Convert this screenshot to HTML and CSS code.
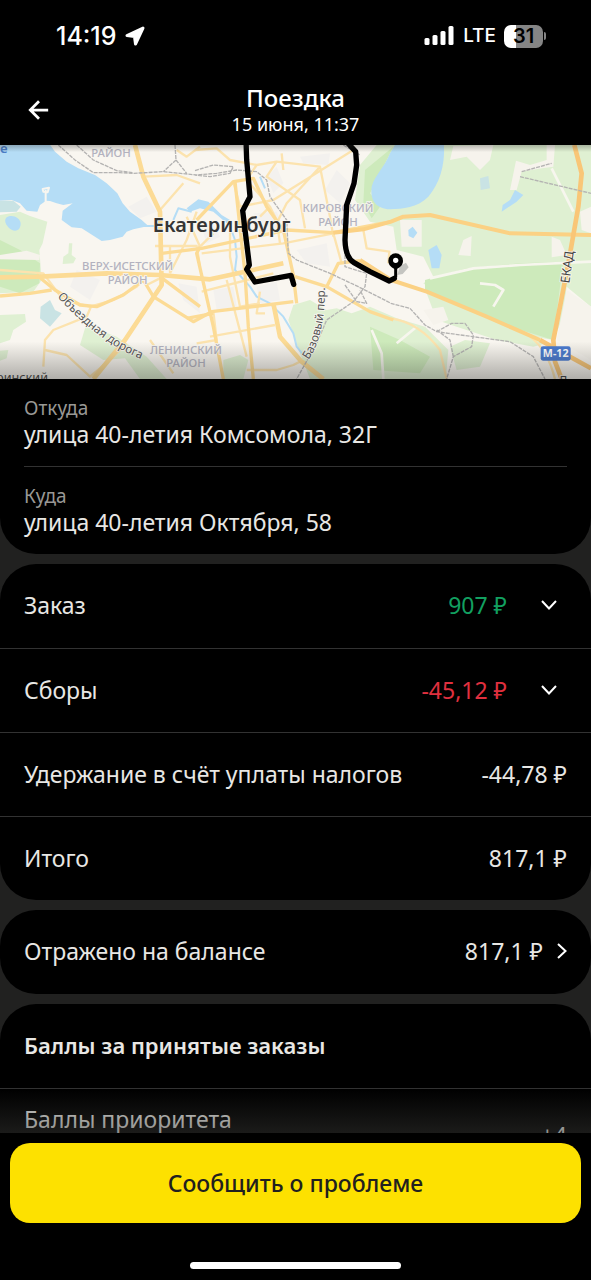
FILE: index.html
```html
<!DOCTYPE html>
<html lang="ru">
<head>
    <meta charset="UTF-8">
    <meta name="viewport" content="width=device-width, initial-scale=1.0">
    <title>Поездка</title>
    <link rel="stylesheet" href="styles.css">
</head>
<body>
    <div class="screen">
        <div class="status-bar">
            <div class="status-left">
                <span class="clock">14:19</span>
                <svg class="location-icon" viewBox="0 0 20 20"><path d="M18 2 2 9.500 9.500 10.500 10.500 18Z"/></svg>
            </div>
            <div class="status-right">
                <svg class="signal-icon" viewBox="0 0 30 20">
                    <rect x="0" y="12" width="5" height="7" rx="1.500"/>
                    <rect x="8" y="9" width="5" height="10" rx="1.500"/>
                    <rect x="16" y="5" width="5" height="14" rx="1.500"/>
                    <rect x="24" y="0" width="5" height="19" rx="1.500"/>
                </svg>
                <span class="network">LTE</span>
                <div class="battery">
                    <span class="battery-level">31</span>
                    <span class="battery-cap"></span>
                </div>
            </div>
        </div>

        <header class="header">
            <button class="back-btn" type="button" aria-label="Назад">
                <svg viewBox="0 0 24 24"><path d="M22 12H3M12 2.500 2.500 12 12 21.500"/></svg>
            </button>
            <div class="header-text">
                <h1>Поездка</h1>
                <p>15 июня, 11:37</p>
            </div>
        </header>

        <main class="content">
            <div class="map">
                <svg viewBox="0 15 1773 702" preserveAspectRatio="xMidYMid slice">
                    <rect class="land" x="0" y="0" width="1773" height="730"/>

                    <!-- parks -->
                    <g class="park">
                        <path d="M0 225 60 215 90 228 142 245 128 310 118 330 125 420 100 455 0 460Z"/>
                        <path d="M0 525 75 522 78 545 40 570 30 600 0 610Z"/>
                        <path d="M0 632 25 630 20 655 0 662Z"/>
                        <path d="M258 555 350 590 440 650 500 717 420 717 375 655 310 660 240 615Z"/>
                        <path d="M190 350 205 340 207 310 217 310 215 345 228 355 220 370 188 372Z"/>
                        <path d="M670 660 720 645 745 660 730 717 670 717Z"/>
                        <path d="M880 495 930 480 980 510 1010 505 1055 520 1110 500 1190 535 1275 560 1345 630 1337 717 930 717 900 640 865 540Z"/>
                        <path d="M1080 75 1130 15 1360 15 1773 15 1773 500 1700 440 1690 530 1660 600 1540 580 1400 530 1270 430 1300 410 1270 350 1190 330 1180 260 1110 245 1065 180Z"/>
                        <path d="M1280 460 1640 610 1600 620 1490 600 1370 560 1310 540Z"/>
                        <path d="M1173 540 1270 570 1340 650 1338 717 1173 717Z"/>
                        <path d="M1395 600 1470 610 1440 680 1370 690 1350 620Z"/>
                    </g>
                    <g class="forest">
                        <path d="M0 300 60 330 120 370 118 430 60 460 0 440Z"/>
                        <path d="M1275 420 1400 385 1560 370 1690 365 1680 440 1660 600 1530 560 1390 500 1275 450Z"/>
                        <path d="M1180 20 1095 90 1090 190 1115 235 1140 200 1110 160Z"/>
                        <path d="M1110 560 1200 600 1290 650 1260 700 1120 690Z"/>
                    </g>

                    <!-- built-up areas and clearings -->
                    <g class="block">
                        <path d="M1360 18 1480 15 1470 60 1440 90 1400 50 1350 60Z"/>
                        <path d="M1548 62 1590 75 1640 60 1640 15 1665 15 1660 80 1625 85 1565 95 1550 150 1530 150Z"/>
                        <path d="M1200 240 1265 240 1265 320 1205 320Z"/>
                        <path d="M1390 300 1415 288 1412 348 1375 345Z"/>
                        <path d="M1655 290 1680 300 1700 345 1655 352Z"/>
                        <path d="M1740 215 1773 200 1773 280 1745 270Z"/>
                        <path d="M1270 510 1330 500 1345 540 1300 555Z"/>
                        <path d="M0 345 80 332 120 345 118 360 0 358Z"/>
                        <path d="M1700 450 1773 500 1773 660 1670 600Z"/>
                    </g>
                    <g class="shade">
                        <path d="M385 200 440 170 470 215 420 235Z"/>
                        <path d="M800 110 830 80 850 130 820 160Z"/>
                        <path d="M900 50 990 40 985 75 910 70Z"/>
                        <path d="M605 260 640 250 660 290 620 310Z"/>
                        <path d="M760 220 830 215 850 260 780 280Z"/>
                        <path d="M890 330 980 310 990 380 920 370Z"/>
                        <path d="M640 450 700 440 710 500 650 510Z"/>
                        <path d="M770 440 830 425 840 480 780 490Z"/>
                        <path d="M1010 90 1050 130 1020 190 975 150Z"/>
                        <path d="M535 430 590 440 600 520 550 480Z"/>
                        <path d="M230 390 300 420 270 480 210 440Z"/>
                    </g>

                    <!-- water -->
                    <g class="water">
                        <path d="M0 0H140L165 35 200 65 235 85 285 105 320 130 352 160 368 190 390 215 425 240 445 258 400 268 380 275 368 290 330 300 305 303 285 290 245 265 215 262 185 240 188 212 218 190 190 195 170 190 150 183 138 182 120 195 112 215 80 212 60 190 35 180 0 182Z"/>
                        <path d="M0 182 40 182 62 200 50 215 0 217Z" class="shallow"/>
                        <path d="M20 232C35 222 62 232 62 252 60 278 38 276 25 262 15 250 12 240 20 232Z"/>
                        <path d="M122 500 150 480 165 510 185 520 150 560 120 535Z" class="shallow"/>
                        <path d="M1185 15H1332C1335 80 1318 130 1285 170 1250 205 1210 205 1170 208 1130 205 1110 185 1115 140 1125 105 1155 80 1170 40Z"/>
                        <path d="M1545 150 1570 165 1550 185 1505 215 1508 195 1530 180Z"/>
                        <path d="M1440 115 1465 108 1470 145 1442 150Z" class="shallow"/>
                        <path d="M1285 330 1310 315 1325 345 1318 385 1295 385Z"/>
                        <path d="M1225 270 1238 260 1252 278 1240 295 1226 288Z"/>
                        <path d="M560 205 595 178 625 185 665 225 690 240 680 250 640 215 600 205 570 215Z"/>
                    </g>
                    <path class="river" d="M425 258H470M520 240 535 205 575 215M685 245 705 300 710 350 705 390 750 440 770 470 810 490 850 530 880 580 890 620 910 645M780 110 795 145"/>
                    <path class="pier" d="M137 190V150M128 147 147 143 143 157 130 155Z"/>

                    <!-- local streets -->
                    <path class="path-line" d="M1290 415 1420 385 1560 375 1773 365M1440 430 1485 435 1510 450 1480 500M1655 85 1720 215M1115 570 1145 640 1150 717M1250 560 1190 610"/>
                    <g class="street">
                        <path d="M430 110 530 105 600 130M550 130 480 210M530 30 560 50 600 20M465 318H590L600 380M510 315V400M560 230 600 320 640 280M590 215 560 300 510 400M440 435 490 410M605 340 850 310 1000 280M605 455 820 400M690 240V350L720 500 780 490M630 590 825 555M680 420 740 650M780 455 770 520 795 520M640 515 650 600 590 610"/>
                        <path d="M585 30 650 25 690 60 770 75 830 65 960 80 990 230 1000 290M770 75 740 120 810 200 830 240 840 310M830 65 800 110 900 180 915 265M960 80 860 190 830 250M700 125 720 200 820 180 1060 30M1000 280 1025 370M1090 270 1100 325 1168 335 1165 370"/>
                        <path d="M0 390 130 400 190 480 270 500 340 480 410 440 430 420M130 680 135 600 160 570 260 530 275 495M135 630 200 645 270 710 330 660 380 610M450 600 520 700M1173 535C1240 545 1290 590 1320 630L1340 717M1590 590C1630 620 1650 660 1665 717"/>
                        <path d="M740 690 830 690 880 675 900 665M845 40 850 90M810 200 780 230"/>
                    </g>

                    <!-- arterial roads -->
                    <g class="road">
                        <path d="M405 15 430 110 480 215 485 435 375 600 280 717" class="wide"/>
                        <path d="M0 412 120 410 320 400 480 405 630 418 850 370" class="wide"/>
                        <path d="M0 468 90 460 155 450M110 405 165 450 240 495 290 500 370 465 430 420 460 470 580 545 635 515 880 485"/>
                        <path d="M600 320 590 340 640 560 670 717"/>
                        <path d="M485 340 605 325 860 270 1000 278 1173 245M560 535 640 520M590 240 700 125 760 115 800 200 850 270 880 405 890 490"/>
                        <path d="M480 410 600 500M705 125 735 400 745 560 760 717"/>
                        <path d="M820 490 840 590 905 665 970 717" class="wide"/>
                        <path d="M980 440 1015 370 1080 362M885 410 980 440 1110 515 1180 540"/>
                        <path d="M1000 278 1090 268 1173 245 1210 230 1290 225 1530 280 1773 285" class="main-road"/>
                        <path d="M1080 360 1173 420 1280 455 1460 530 1620 600" class="main-road"/>
                    </g>
                    <g class="highway">
                        <path d="M1723 15 1745 100 1735 200 1705 370 1680 500 1660 600 1665 665 1685 717"/>
                        <path d="M1620 600 1710 650 1773 685"/>
                    </g>

                    <!-- railways -->
                    <path class="railway" d="M175 15 225 60 280 98 360 98 400 100 490 95 590 105 650 100 710 90 770 95 800 120 810 170 860 240 865 340 890 360 990 400 1075 440 1173 490 1230 505 1275 555 1310 575 1345 580 1530 605 1600 650 1635 717M230 15 280 60 350 92 400 98M525 15 528 60 490 95M528 60 560 100M585 92 640 75 700 80 690 100 630 110 585 105M1030 15 1080 45M1035 330 1035 380 1100 400 1095 440 1060 485 980 540 950 610 890 717M1035 435 1070 485 1100 490 1080 450M1310 575 1355 550 1395 550 1420 585 1415 620 1360 650 1340 717M1310 570 1350 600 1360 650M1565 95 1655 70M1560 110 1773 160"/>

                    <!-- place names -->
                    <g class="district">
                        <text x="333" y="51">РАЙОН</text>
                        <text x="383" y="391">ВЕРХ-ИСЕТСКИЙ</text>
                        <text x="383" y="431">РАЙОН</text>
                        <text x="558" y="641">ЛЕНИНСКИЙ</text>
                        <text x="558" y="681">РАЙОН</text>
                        <text x="1014" y="217">КИРОВСКИЙ</text>
                        <text x="1014" y="257">РАЙОН</text>
                    </g>
                    <text class="city" x="665" y="275">Екатеринбург</text>
                    <text class="water-name" x="0" y="40">е</text>
                    <text class="place" x="-12" y="727">ринский</text>
                    <path id="bypass" class="label-path" d="M172 470Q225 530 290 580T430 660"/>
                    <text class="street-name"><textPath href="#bypass">Объездная дорога</textPath></text>
                    <path id="lane" class="label-path" d="M925 660Q975 590 975 445V400"/>
                    <text class="street-name"><textPath href="#lane">Базовый пер.</textPath></text>
                    <text class="highway-name" transform="translate(1708 431) rotate(-82)">ЕКАД</text>
                    <text class="highway-name" transform="translate(1675 735)">Д</text>

                    <rect class="shield" x="1622" y="619" width="90" height="43" rx="7"/>
                    <text class="shield-text" x="1667" y="652">М-12</text>

                    <!-- trip route -->
                    <path class="route" d="M738 0 740 60 750 170 728 212 748 375 740 388 765 426 873 406 881 433"/>
                    <path class="route" d="M1035 0 1067 35 1070 75 1062 130 1040 195 1035 300C1036 335 1045 358 1062 368L1110 395 1168 423 1183 415"/>
                    <path class="pin-shadow" d="M1192 405 1200 378 1218 368 1226 382 1208 402Z"/>
                    <path class="pin-stem" d="M1187 375V412"/>
                    <path class="pin" d="M1165 362A22 22 0 0 1 1209 362C1209 378 1196 384 1187 388 1178 384 1165 378 1165 362Z"/>
                    <circle class="pin-dot" cx="1187" cy="361" r="8"/>
                </svg>
            </div>

            <section class="card addresses">
                <div class="address">
                    <p class="address-label">Откуда</p>
                    <p class="address-value">улица 40-летия Комсомола, 32Г</p>
                </div>
                <div class="address">
                    <p class="address-label">Куда</p>
                    <p class="address-value">улица 40-летия Октября, 58</p>
                </div>
            </section>

            <section class="card">
                <button class="row" type="button">
                    <span class="row-title">Заказ</span>
                    <span class="income">907 ₽</span>
                    <svg class="chevron-down" viewBox="0 0 16 10"><path d="M1 1 8 8.500 15 1"/></svg>
                </button>
                <button class="row" type="button">
                    <span class="row-title">Сборы</span>
                    <span class="expense">-45,12 ₽</span>
                    <svg class="chevron-down" viewBox="0 0 16 10"><path d="M1 1 8 8.500 15 1"/></svg>
                </button>
                <div class="row">
                    <span class="row-title">Удержание в счёт уплаты налогов</span>
                    <span>-44,78 ₽</span>
                </div>
                <div class="row">
                    <span class="row-title">Итого</span>
                    <span>817,1 ₽</span>
                </div>
            </section>

            <section class="card">
                <button class="row" type="button">
                    <span class="row-title">Отражено на балансе</span>
                    <span>817,1 ₽</span>
                    <svg class="chevron-right" viewBox="0 0 10 16"><path d="M1 1 8.500 8 1 15"/></svg>
                </button>
            </section>

            <section class="card">
                <div class="row">
                    <h2 class="row-title">Баллы за принятые заказы</h2>
                </div>
                <div class="row points-row">
                    <span class="row-title">Баллы приоритета</span>
                    <span class="points">+4</span>
                </div>
            </section>
        </main>

        <footer class="footer">
            <button class="report-btn" type="button">Сообщить о проблеме</button>
            <div class="home-indicator"></div>
        </footer>
    </div>
</body>
</html>
```
FILE: styles.css
```css
* {
    margin: 0;
    padding: 0;
    box-sizing: border-box;
}

body {
    font-family: "Noto Sans", "Open Sans", sans-serif;
    font-size: 23px;
    line-height: 28px;
    background: #000;
    color: #e8e7e4;
}

button {
    font: inherit;
    color: inherit;
    background: none;
    border: none;
    cursor: pointer;
}

svg {
    display: block;
    flex-shrink: 0;
}

.screen {
    height: 100vh;
    display: flex;
    flex-direction: column;
}

/* Status bar */
.status-bar {
    height: 72px;
    padding: 0 45px 0 56px;
    display: flex;
    justify-content: space-between;
    align-items: center;
    flex-shrink: 0;
    font-family: Inter, sans-serif;
    color: #fff;
}

.status-left,
.status-right {
    display: flex;
    align-items: center;
    gap: 8px;
}

.clock {
    font-size: 25px;
    font-weight: 500;
}

.location-icon {
    width: 20px;
    height: 20px;
    fill: #fff;
    stroke: #fff;
    stroke-width: 3;
    stroke-linejoin: round;
}

.signal-icon {
    width: 31px;
    height: 20px;
    fill: #fff;
}

.network {
    font-size: 19px;
    font-weight: 500;
}

.battery {
    display: flex;
    align-items: center;
    gap: 1px;
}

.battery-level {
    width: 39px;
    height: 23px;
    border-radius: 7px;
    background: linear-gradient(90deg, #fff 30%, #858585 30%);
    color: #000;
    font-size: 20px;
    font-weight: 600;
    line-height: 23px;
    text-align: center;
}

.battery-cap {
    width: 2px;
    height: 8px;
    border-radius: 0 3px 3px 0;
    background: #858585;
}

/* Header */
.header {
    height: 73px;
    padding: 2px 24px 0;
    display: grid;
    grid-template-columns: 32px 1fr 32px;
    align-items: center;
    flex-shrink: 0;
    color: #fff;
}

.back-btn {
    padding: 0 4px;
}

.back-btn svg {
    width: 22px;
    height: 22px;
    fill: none;
    stroke: #fff;
    stroke-width: 3;
}

.header-text {
    text-align: center;
}

.header-text h1 {
    font-size: 24px;
    font-weight: 500;
    line-height: 28px;
}

.header-text p {
    font-size: 18px;
    line-height: 24px;
}

/* Scrolling content */
.content {
    position: relative;
    flex: 1;
    min-height: 0;
    overflow: hidden;
    display: flex;
    flex-direction: column;
    gap: 10px;
    background: #212120;
}

.content::after {
    content: "";
    position: absolute;
    left: 0;
    right: 0;
    bottom: 0;
    height: 44px;
    background: linear-gradient(rgba(60, 60, 57, 0), rgba(60, 60, 57, 0.45));
}

.map {
    position: relative;
    height: 234px;
    flex-shrink: 0;
    margin-bottom: -10px;
    overflow: hidden;
}

.map::after {
    content: "";
    position: absolute;
    inset: 0;
    background: linear-gradient(rgba(40, 40, 38, 0.3), rgba(40, 40, 38, 0) 3%, rgba(40, 40, 38, 0) 84%, rgba(40, 40, 38, 0.35));
}

.map svg {
    width: 100%;
    height: 100%;
    font-family: "Noto Sans", sans-serif;
}

.land { fill: #f9f6f0; }
.park { fill: #dff0d2; }
.forest { fill: #cdeabb; }
.block { fill: #f6f3ec; }
.shade { fill: #f3f1ee; }
.water { fill: #b5ddf6; }
.shallow { fill: #c9e3e4; }

.river,
.pier,
.path-line,
.street,
.road,
.highway,
.railway,
.label-path,
.route,
.pin-stem {
    fill: none;
    stroke-linejoin: round;
}

.river {
    stroke: #b5ddf6;
    stroke-width: 6;
}

.pier {
    stroke: #f8f6f0;
    stroke-width: 6;
}

.path-line {
    stroke: #f7f6ee;
    stroke-width: 8;
}

.street {
    stroke: #fce3ae;
    stroke-width: 7;
}

.road {
    stroke: #fcdb95;
    stroke-width: 10;
}

.road .wide {
    stroke-width: 14;
}

.road .main-road {
    stroke: #fbd184;
    stroke-width: 12;
}

.highway {
    stroke: #f9c677;
    stroke-width: 14;
}

.railway {
    stroke: #b4b3b2;
    stroke-width: 4;
    stroke-dasharray: 12 3;
}

.district,
.city,
.street-name,
.highway-name {
    paint-order: stroke;
    stroke: #f8f6f0;
    stroke-width: 5;
}

.district {
    font-size: 34px;
    font-weight: 500;
    fill: #b3b2bf;
    text-anchor: middle;
}

.city {
    font-size: 60px;
    font-weight: 600;
    fill: #353535;
    text-anchor: middle;
}

.water-name {
    font-size: 40px;
    font-weight: 600;
    fill: #4a7cc4;
}

.place {
    font-size: 38px;
    fill: #444;
}

.street-name {
    font-size: 35px;
    fill: #555;
}

.highway-name {
    font-size: 38px;
    fill: #444;
}

.shield {
    fill: #4a7bd0;
}

.shield-text {
    font-size: 32px;
    font-weight: 700;
    fill: #fff;
    text-anchor: middle;
}

.route {
    stroke: #000;
    stroke-width: 16;
    stroke-linecap: round;
}

.pin-shadow {
    fill: #c4c4c0;
}

.pin-stem {
    stroke: #000;
    stroke-width: 9;
}

.pin {
    fill: #000;
}

.pin-dot {
    fill: #fff;
}

/* Cards */
.card {
    flex-shrink: 0;
    border-radius: 36px;
    background: #000;
    overflow: hidden;
}

.addresses {
    padding: 0 24px;
    border-radius: 0 0 36px 36px;
}

.address {
    padding: 17px 0 18px;
}

.address + .address {
    border-top: 1px solid #323232;
}

.address-label {
    font-size: 19px;
    line-height: 24px;
    color: #999895;
}

.row {
    width: 100%;
    height: 84px;
    padding: 0 24px 2px;
    display: flex;
    align-items: center;
    text-align: left;
}

.row + .row {
    border-top: 1px solid #323232;
}

.row-title {
    flex: 1;
}

h2.row-title {
    font-size: 22px;
    font-weight: 600;
}

.income {
    color: #12a060;
}

.expense {
    color: #e0303f;
}

.chevron-down,
.chevron-right {
    fill: none;
    stroke: #fff;
    stroke-width: 2;
}

.chevron-down {
    width: 16px;
    height: 10px;
    margin: 0 10px 0 34px;
}

.chevron-right {
    width: 10px;
    height: 16px;
    margin-left: 14px;
}

.points-row {
    height: 92px;
    padding-top: 16px;
    padding-bottom: 16px;
    color: #d4d4d1;
}

.points-row .row-title {
    align-self: flex-start;
}

/* Footer */
.footer {
    padding: 10px 10px 11px;
    display: flex;
    flex-direction: column;
    align-items: center;
    gap: 39px;
    flex-shrink: 0;
}

.report-btn {
    width: 100%;
    height: 80px;
    border-radius: 20px;
    background: #fde100;
    color: #21201f;
    font-weight: 500;
}

.home-indicator {
    width: 211px;
    height: 7px;
    border-radius: 4px;
    background: #fff;
}
```
